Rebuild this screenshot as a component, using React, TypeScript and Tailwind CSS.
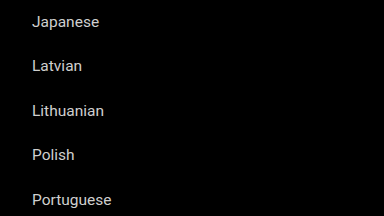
const languages = ['Japanese', 'Latvian', 'Lithuanian', 'Polish', 'Portuguese']

export default function App() {
  return (
    <div className="h-[216px] w-[384px] overflow-hidden bg-black font-['Roboto',sans-serif]">
      <ul className="flex flex-col">
        {languages.map((name) => (
          <li key={name} className="flex h-[44.5px] items-center pl-8 text-[15.5px] text-[#cfcfcf]">
            {name}
          </li>
        ))}
      </ul>
    </div>
  )
}
